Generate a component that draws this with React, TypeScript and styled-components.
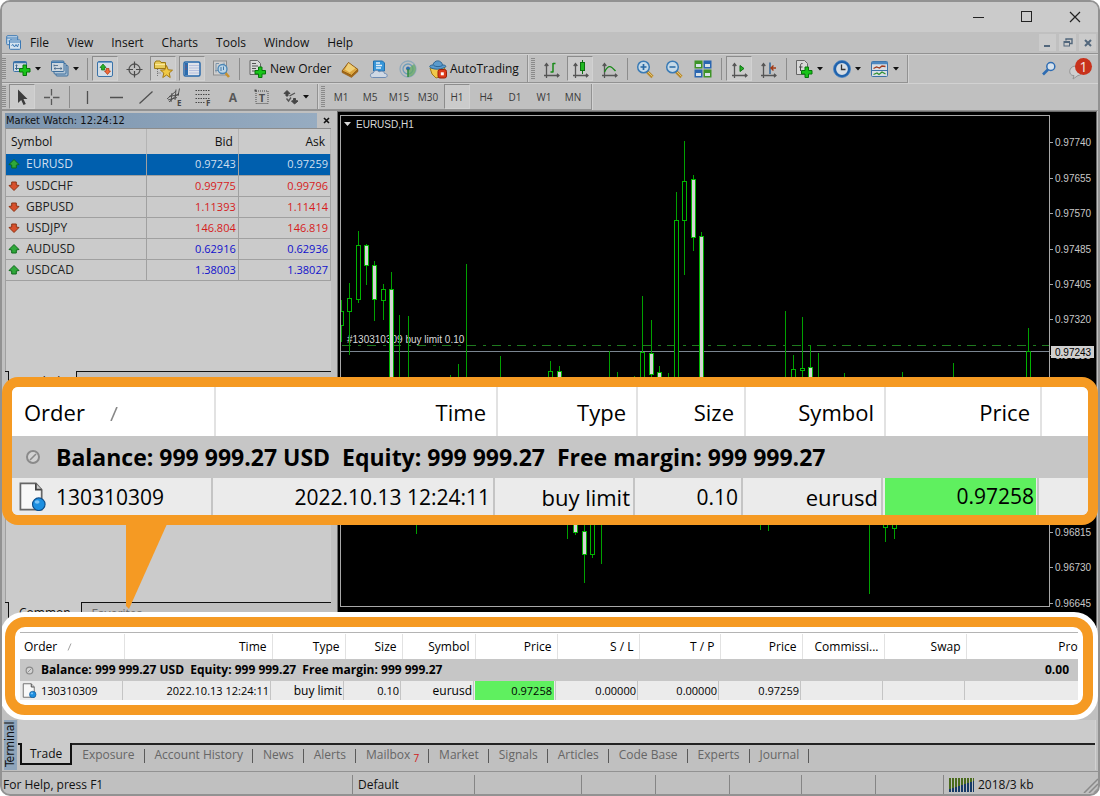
import React from "react";
import styled, { createGlobalStyle, css } from "styled-components";

const ui = `"Open Sans", "Noto Sans", sans-serif`;
const tahoma = `"DejaVu Sans Condensed", "DejaVu Sans", sans-serif`;
const orange = "#f59a23";
const face = "#c0c0c0";
const light = "#cbcbcb";
const edge = "#929292";

const GlobalStyle = createGlobalStyle`
  * { box-sizing: border-box; }
  body { margin: 0; background: #fff; font-family: ${ui}; font-size: 12px; color: #111; }
  button { font: inherit; color: inherit; background: none; border: 0; padding: 0; margin: 0; }
  table { border-collapse: collapse; border-spacing: 0; }
  svg { display: block; }
`;

const Frame = styled.div`
  min-height: 100vh;
  display: flex;
  flex-direction: column;
  background: ${face};
  border: 2px solid ${edge};
  border-radius: 10px;
  overflow: hidden;
`;

/* ---------- title bar and menu ---------- */

const TitleBar = styled.header`
  height: 30px;
  background: ${light};
  display: flex;
  justify-content: flex-end;
  align-items: center;
  padding-right: 15px;
  gap: 32px;
`;

const CaptionButton = styled.button`
  width: 16px;
  height: 16px;
  display: grid;
  place-items: center;
`;

const MenuBar = styled.nav`
  height: 22px;
  display: flex;
  align-items: center;
  padding: 0 2px 0 4px;
  border-bottom: 1px solid ${edge};
`;

const MenuItem = styled.button`
  padding: 0 9px;
  line-height: 16px;
`;

const MdiButtons = styled.div`
  margin-left: auto;
  display: flex;
  gap: 3px;
`;

const MdiButton = styled.button`
  width: 17px;
  height: 17px;
  background: ${light};
  display: grid;
  place-items: center;
`;

/* ---------- toolbars ---------- */

const ToolRow = styled.div`
  display: flex;
  height: 29px;
  align-items: stretch;
  border-top: 1px solid #d2d2d2;
`;

const LowerRow = styled(ToolRow)`
  height: 28px;
  border-bottom: 1px solid ${edge};
`;

const Group = styled.div`
  display: flex;
  align-items: center;
  padding: 0 2px 0 3px;
  border-right: 1px solid ${edge};
  border-bottom: 1px solid ${edge};
  box-shadow: 1px 0 0 #d2d2d2;
  &:first-child { padding-left: 0; }
`;

const Grip = styled.i`
  width: 4px;
  height: 21px;
  margin-right: 3px;
  background: repeating-linear-gradient(#8a8a8a 0 1px, ${face} 1px 2px);
`;

const ToolButton = styled.button<{ $pressed?: boolean }>`
  width: 26px;
  height: 25px;
  margin-right: 3px;
  display: grid;
  place-items: center;
  border: 1px solid transparent;
  ${(p) =>
    p.$pressed &&
    css`
      background: ${light};
      border-color: #8c8c8c #d2d2d2 #d2d2d2 #8c8c8c;
    `}
`;

const FrameButton = styled(ToolButton)`
  font-size: 10px;
  color: #3a3a3a;
`;

const WideButton = styled.button<{ $width: number }>`
  min-width: ${(p) => p.$width}px;
  height: 25px;
  margin-right: 3px;
  padding-left: 4px;
  display: flex;
  align-items: center;
  gap: 2px;
  white-space: nowrap;
`;

const DropButton = styled.button`
  width: 38px;
  height: 25px;
  padding-left: 3px;
  display: flex;
  align-items: center;
  gap: 3px;
`;

const Sep = styled.i`
  width: 1px;
  height: 22px;
  margin: 0 4px 0 2px;
  background: #8c8c8c;
`;

const RightTools = styled.div`
  margin-left: auto;
  display: flex;
  align-items: center;
  gap: 11px;
  padding-right: 4px;
`;

const ToolFlat = styled.button`
  display: block;
`;

/* ---------- workspace ---------- */

const Workspace = styled.main`
  flex: 1;
  min-height: 320px;
  display: flex;
  position: relative;
`;

const Side = styled.aside`
  width: 329px;
  flex: none;
  margin-right: 6px;
  padding: 2px 0 0 3px;
  display: flex;
  flex-direction: column;
`;

const PanelTitle = styled.div`
  display: flex;
  align-items: center;
  height: 15px;
  font-family: ${tahoma};
  font-size: 11px;
  line-height: 15px;
`;

const PanelName = styled.span`
  flex: 1;
  padding-left: 1px;
  background: linear-gradient(90deg, #7b94ae, #97acc1);
`;

const PanelClose = styled.button`
  width: 14px;
  height: 15px;
  padding-left: 4px;
  display: grid;
  place-items: center;
`;

const PanelBody = styled.div<{ $grow?: boolean }>`
  background: ${light};
  border-top: 1px solid #8c8c8c;
  border-left: 1px solid #a0a0a0;
  ${(p) => (p.$grow ? "flex: 1;" : "height: 243px;")}
`;

const Quotes = styled.table`
  width: 100%;
  table-layout: fixed;
  th {
    height: 25px;
    padding: 0 5px;
    font-weight: 400;
    text-align: right;
    border-right: 1px solid #b4b4b4;
  }
  th:first-child { text-align: left; }
`;

const SymbolCol = styled.col`width: 140px;`;
const QuoteCol = styled.col`width: auto;`;

const QuoteRow = styled.tr<{ $tone: string; $selected?: boolean }>`
  background: ${(p) => (p.$selected ? "#005fae" : "transparent")};
  td {
    height: 21px;
    padding: 0 2px;
    border-right: 1px solid #a0a0a0;
    border-bottom: 1px solid #a0a0a0;
    text-align: right;
    font-size: 11px;
    line-height: 18px;
    color: ${(p) => p.$tone};
  }
  td:first-child {
    text-align: left;
    font-size: 12px;
    color: ${(p) => (p.$selected ? "#d0dfee" : "#222")};
  }
`;

const SymbolName = styled.span`
  display: flex;
  align-items: center;
  gap: 6px;
  line-height: 18px;
`;

const SideTabs = styled.div<{ $height: number }>`
  height: ${(p) => p.$height}px;
  display: flex;
  overflow: hidden;
  line-height: 18px;
  &::before { content: ""; width: 3px; border-top: 1px solid #111; border-right: 1px solid #111; }
`;

const SideTab = styled.button<{ $active?: boolean }>`
  padding: 2px 10px 0;
  display: flex;
  ${(p) =>
    p.$active
      ? css`background: ${light}; border-right: 1px solid #111;`
      : css`color: #6a6a6a; border-top: 1px solid #111;`}
`;

const TabRest = styled.div`
  flex: 1;
  border-top: 1px solid #111;
`;

const ChartPane = styled.section`
  flex: 1;
  min-width: 0;
  display: flex;
  background: #000;
  border: 1px solid #6a6a6a;
  border-bottom: 0;
  margin-right: 1px;
`;

const Plot = styled.div`
  flex: 1;
  min-width: 0;
  margin: 3px 0 21px 2px;
  border: 1px solid #a8a8a8;
  position: relative;
  overflow: hidden;
`;

const PlotArt = styled.svg`
  position: absolute;
  left: 0;
  top: 0;
  width: 100%;
  height: 100%;
  font: 10px "Liberation Sans", Arial, sans-serif;
  fill: #d8d8d8;
`;

const Axis = styled.svg`
  flex: none;
  width: 46px;
  height: 100%;
  font: 10px "Liberation Sans", Arial, sans-serif;
  fill: #c8c8c8;
`;

/* ---------- magnified callout ---------- */

const Callout = styled.section`
  position: absolute;
  left: 0;
  right: 0;
  top: 266px;
  height: 148px;
  border: 10px solid ${orange};
  border-radius: 16px;
  background: #ebebeb;
`;

const CalloutClip = styled.div`
  height: 100%;
  overflow: hidden;
  border-radius: 6px;
`;

const Pointer = styled.svg`
  position: absolute;
  left: 124px;
  top: 413px;
  z-index: 1;
`;

/* ---------- orders tables ---------- */

const Orders = styled.table<{ $big?: boolean }>`
  table-layout: fixed;
  width: ${(p) => (p.$big ? "100%" : "calc(100% + 16px)")};
  font-size: ${(p) => (p.$big ? 22 : 12)}px;
  line-height: ${(p) => (p.$big ? 28 : 16)}px;
  white-space: nowrap;
  color: #000;
  th, td { padding: 0; text-align: right; overflow: hidden; }
  th {
    height: ${(p) => (p.$big ? 49 : 25)}px;
    background: #fff;
    font-weight: 400;
    padding-right: ${(p) => (p.$big ? 10 : 5)}px;
    border-right: ${(p) => (p.$big ? 2 : 1)}px solid #e2e2e2;
  }
  th:first-child {
    text-align: left;
    padding-left: ${(p) => (p.$big ? 12 : 4)}px;
  }
  th:last-child { border-right: 0; }
`;

const Width = styled.col<{ $w?: number }>`
  width: ${(p) => (p.$w ? `${p.$w}px` : "auto")};
`;

const BalanceRow = styled.tr<{ $big?: boolean }>`
  background: #c6c6c6;
  td {
    height: ${(p) => (p.$big ? 42 : 22)}px;
    font-weight: 700;
    font-size: ${(p) => (p.$big ? 23 : 12)}px;
    white-space: pre;
  }
  td:last-child { padding-right: ${(p) => (p.$big ? 0 : 25)}px; }
`;

const OrderRow = styled.tr<{ $big?: boolean }>`
  background: #ebebeb;
  td {
    height: ${(p) => (p.$big ? 37 : 19)}px;
    font-size: ${(p) => (p.$big ? 21 : 11)}px;
    padding-right: ${(p) => (p.$big ? 7 : 3)}px;
    background: linear-gradient(#c4c4c4, #c4c4c4) right ${(p) => (p.$big ? 2 : 1)}px top /
      ${(p) => (p.$big ? 2 : 1)}px 100% no-repeat;
  }
  td:nth-child(3), td:nth-child(5) {
    font-size: ${(p) => (p.$big ? 22 : 12)}px;
  }
  td:last-child { background: none; }
`;

const PriceHit = styled.span<{ $big?: boolean }>`
  display: block;
  background: #5ff05f;
  height: ${(p) => (p.$big ? 37 : 19)}px;
  line-height: ${(p) => (p.$big ? 36 : 19)}px;
  margin-right: ${(p) => (p.$big ? -2 : 0)}px;
  padding-right: 2px;
`;

const WithIcon = styled.span<{ $big?: boolean }>`
  display: flex;
  align-items: center;
  gap: ${(p) => (p.$big ? 9 : 4)}px;
  padding-left: ${(p) => (p.$big ? 6 : 1)}px;
`;

const PadIcon = styled.span<{ $big?: boolean }>`
  width: ${(p) => (p.$big ? 29 : 16)}px;
  display: grid;
  place-items: center;
`;

const SortMark = styled.span<{ $big?: boolean }>`
  display: inline-block;
  margin-left: ${(p) => (p.$big ? 24 : 10)}px;
  svg { display: inline-block; vertical-align: baseline; }
`;

/* ---------- terminal ---------- */

const Terminal = styled.section`
  display: flex;
  flex-direction: column;
  position: relative;
`;

const Highlight = styled.div`
  margin: -16px 0 0 -2px;
  position: relative;
  background: #fff;
  border-radius: 24px;
  padding: 5px;
`;

const HighlightRing = styled.div`
  border: 10px solid ${orange};
  border-radius: 20px;
  padding: 5px;
`;

const HighlightClip = styled.div`
  overflow: hidden;
  border-top: 1px solid #b4b4b4;
  padding-top: 1px;
`;

const TerminalFoot = styled.div`
  display: flex;
  height: 50px;
  margin-bottom: 1px;
  padding-left: 2px;
`;

const TerminalName = styled.div`
  width: 13px;
  background: #8fa5bb;
  writing-mode: vertical-rl;
  transform: rotate(180deg);
  font-family: ${tahoma};
  font-size: 12px;
  line-height: 13px;
  padding-top: 3px;
  white-space: nowrap;
`;

const TabArea = styled.div`
  flex: 1;
  min-width: 0;
  display: flex;
  flex-direction: column;
  margin: 0 2px 0 1px;
  border-right: 1px solid #d2d2d2;
  &::before { content: ""; height: 23px; background: ${light}; flex: none; }
`;

const Tabs = styled.div`
  display: flex;
  align-items: flex-start;
  &::before { content: ""; width: 2px; height: 2px; background: #111; }
`;

const Tab = styled.button<{ $active?: boolean }>`
  height: 22px;
  padding: 0 10px;
  line-height: 18px;
  white-space: nowrap;
  color: #666;
  border-top: 2px solid #222;
  ${(p) =>
    p.$active
      ? css`
          color: #111;
          background: ${light};
          border: 2px solid #111;
          border-top: 0;
          padding: 0 8px;
          line-height: 22px;
        `
      : css`
          background: linear-gradient(#5a5a5a, #5a5a5a) right 4px / 1px 14px no-repeat;
        `}
`;

const TabLine = styled.div`
  flex: 1;
  height: 2px;
  background: #222;
`;

const MailCount = styled.sub`
  color: #d01818;
  font-size: 10px;
  line-height: 0;
  margin-left: 3px;
`;

const StatusBar = styled.footer`
  height: 23px;
  display: flex;
  align-items: center;
  border-top: 1px solid ${edge};
  padding-top: 3px;
  line-height: 16px;
  overflow: hidden;
`;

const StatusCell = styled.div<{ $w?: number }>`
  ${(p) => (p.$w ? `width: ${p.$w}px;` : "flex: 1;")}
  flex-shrink: 0;
  height: 19px;
  display: flex;
  align-items: center;
  gap: 4px;
  padding-left: 5px;
  border-left: 1px solid #858585;
  &:first-child { border-left: 0; padding-left: 1px; }
`;

const ResizeGrip = styled.span`
  margin-left: auto;
`;

/* ---------- icons ---------- */

const Icon = ({ children, size = 20 }: { children: React.ReactNode; size?: number }) => (
  <svg width={size} height={size} viewBox="0 0 20 20" fill="none" aria-hidden="true">
    {children}
  </svg>
);

const Caret = () => (
  <svg width="6" height="4" viewBox="0 0 6 4" aria-hidden="true">
    <path d="M0 0H6L3 3.5Z" fill="#111" />
  </svg>
);

const Plus = ({ x, y }: { x: number; y: number }) => (
  <path
    transform={`translate(${x} ${y})`}
    d="M4 0.5H7.5V4H11V7.5H7.5V11H4V7.5H0.5V4H4Z"
    fill="#19c419"
    stroke="#07760a"
  />
);

const AxisBase = () => (
  <path d="M5.5 5V19M3 16.5H18M3.700 7L5.500 4.500L7.300 7M16 14.700L18 16.500L16 18.300" stroke="#555" strokeWidth="1.300" />
);

const AppIcon = () => (
  <svg width="15" height="15" viewBox="0 0 15 15" fill="none" aria-hidden="true">
    <rect x=".7" y=".7" width="11" height="9" rx="1" fill="#c9dcec" stroke="#3a78b4" />
    <path d="M1 3H11.500M2.500 6H4L5 4.500L6 6" stroke="#3a78b4" />
    <rect x="3.500" y="5" width="11" height="9.300" rx="1" fill="#d5e4f0" stroke="#3a78b4" />
    <path d="M4 7H14M5.500 10.500L7 9.500L8.500 12L10 9.500L11.500 12L12.500 9" stroke="#3a78b4" />
  </svg>
);

const NewChart = () => (
  <Icon>
    <rect x="1.500" y="2.500" width="13" height="10" rx="1" fill="#d0dae2" stroke="#3a72a8" />
    <path d="M1.500 3.500H14.500" stroke="#3a72a8" strokeWidth="1.500" />
    <path d="M4.500 5.500V11M3 9.500H7.500M3.500 7L4.500 6L5.500 7" stroke="#40698e" />
    <Plus x={7} y={5.500} />
  </Icon>
);

const Profiles = () => (
  <Icon>
    <rect x="6" y="6.500" width="12" height="10.500" rx="1" fill="#a4bdd2" stroke="#3f6f9c" />
    <rect x="4" y="4.500" width="12" height="10.500" rx="1" fill="#b3c7d8" stroke="#3f6f9c" />
    <rect x="1.500" y="2" width="12.500" height="10.500" rx="1" fill="#ccd6de" stroke="#3f6f9c" />
    <path d="M1.500 3.200H14" stroke="#3f78ae" strokeWidth="1.500" />
    <path d="M4 5.500V7.500M4 6.500H8M4 9.500H12M5.500 8.500L4 9.500L5.500 10.500M10.500 8.500L12 9.500L10.500 10.500" stroke="#3f6184" strokeWidth=".8" />
  </Icon>
);

const MarketWatchIcon = () => (
  <Icon>
    <rect x="2.500" y="2.500" width="15" height="15" rx="1.500" fill="#d3dde6" stroke="#3a72a8" />
    <path d="M3 3.500H17" stroke="#6fa0cc" />
    <path d="M8 5L11 8.500H9.500V11H6.500V8.500H5Z" fill="#28b428" stroke="#0c7010" strokeWidth=".7" />
    <path d="M12.500 15.500L9.500 12H11V9.500H14V12H15.500Z" fill="#f06a3a" stroke="#a83410" strokeWidth=".7" />
  </Icon>
);

const CrosshairIcon = () => (
  <Icon>
    <circle cx="10.500" cy="10.500" r="5.500" stroke="#565656" strokeWidth="1.300" />
    <path d="M10.500 2.500V9M10.500 12V18.500M2.500 10.500H9M12 10.500H18.500" stroke="#4a4a4a" strokeWidth="1.200" />
  </Icon>
);

const NavigatorIcon = () => (
  <Icon>
    <path d="M1.500 4L3 2H7L8 3.500H12.500V9.500H1.500Z" fill="#e8cc5c" stroke="#9c7a16" />
    <path d="M2 5.500H12" stroke="#fbe99a" />
    <path d="M4.500 10V18M4.500 14H8" stroke="#777" strokeDasharray="1 1" />
    <path d="M13.500 6.500L15.200 10.800L19.500 11.200L16.200 14L17.200 18.500L13.500 16L9.800 18.500L10.800 14L7.500 11.200L11.800 10.800Z" fill="#f0c844" stroke="#a67a10" />
  </Icon>
);

const TerminalIcon = () => (
  <Icon>
    <rect x="2" y="3" width="16" height="14" rx="1.500" fill="#dfe3ea" stroke="#2869aa" strokeWidth="1.500" />
    <rect x="3" y="4" width="3" height="12" fill="#2a6cae" />
    <path d="M7.500 6.500H17M7.500 9H17M7.500 11.500H17M7.500 14H17" stroke="#8b9bd0" strokeDasharray="1 1" />
    <path d="M3.500 7H4.500M3.500 10H4.500" stroke="#d33" />
  </Icon>
);

const TesterIcon = () => (
  <Icon>
    <rect x="2.500" y="2" width="13" height="14" fill="#cfcfcf" stroke="#8d8d8d" />
    <path d="M5 4.500V13.500M5 4.500H8M13 3.500V6M4 11.500H7" stroke="#7b93a8" />
    <path d="M14.500 14L18 18" stroke="#c8912c" strokeWidth="2.600" />
    <circle cx="11.500" cy="10" r="4.500" fill="#b9d6ea" fillOpacity=".85" stroke="#4a86b6" strokeWidth="1.300" />
    <path d="M10 8V12M12.500 7.500V11" stroke="#4077a8" />
  </Icon>
);

const NewOrderIcon = () => (
  <Icon>
    <path d="M2 1.500H9.500L12.500 4.500V15.500H2Z" fill="#d8d8d8" stroke="#666" />
    <path d="M4 4.500H8M4 7H10M4 9.500H8M4 12H7" stroke="#555" />
    <Plus x={6.500} y={7.500} />
  </Icon>
);

const EditorIcon = () => (
  <Icon>
    <path d="M8.500 3.500L18 10.500L11.500 16.500L2 12Z" fill="#dca640" stroke="#8d5a12" />
    <path d="M8.500 4L15.500 9.200L9.500 13.500L5 10.500Z" fill="#efcf78" />
    <path d="M2 12V13.500L11.500 18.500L18 12.500V10.500L11.500 16.500Z" fill="#a86a18" stroke="#8d5a12" strokeWidth=".5" />
  </Icon>
);

const CloudIcon = () => (
  <Icon>
    <path d="M4.500 2H13.500L15.500 4V12H4.500Z" fill="#3796d8" stroke="#2070b0" />
    <path d="M7 4H11M7 6.500H13M7 9H12" stroke="#e2f0fa" strokeWidth="1.300" />
    <path d="M3.500 18.500C.5 18.500 .8 13.800 4.200 14C5 10.800 9 10.800 10 13C12.500 11.300 15.500 12.500 15.500 14.500C19 14.300 19 18.500 16 18.500Z" fill="#cfd8e4" stroke="#6f8cb4" />
  </Icon>
);

const SignalIcon = () => (
  <Icon>
    <circle cx="10" cy="10" r="8" stroke="#8fa9bb" strokeWidth="1.300" />
    <circle cx="10" cy="10" r="5" stroke="#6c9dbb" strokeWidth="1.300" />
    <path d="M10 18A8 8 0 0 0 16 5L10 10Z" fill="#5fa860" fillOpacity=".7" />
    <circle cx="10" cy="9.500" r="2" fill="#2f6fae" />
    <path d="M10 10V18" stroke="#2f8a40" strokeWidth="1.500" />
  </Icon>
);

const AutoIcon = () => (
  <Icon>
    <path d="M2 9L17 8L14.500 17L8 19L4 15Z" fill="#f0c84a" stroke="#a07a18" />
    <path d="M5 6C6 .5 13.500 .5 14.500 6C18 6 19 7.500 16 8.800C12 10.800 6.500 10.500 3 9C.5 7.500 2 6 5 6Z" fill="#5b9bcd" stroke="#2d6594" />
    <path d="M5.500 6.500C8 8 12 8 14.500 6.500" stroke="#2d6594" />
    <rect x="10" y="10.500" width="8.500" height="8.500" rx="2" fill="#dd3a1a" stroke="#9a2008" />
    <rect x="12.800" y="13.300" width="3" height="3" fill="#fff" />
  </Icon>
);

const BarsIcon = () => (
  <Icon>
    <AxisBase />
    <path d="M12 4V13.500M12 4.500H14.500M9.500 13H12" stroke="#188a18" strokeWidth="1.500" />
  </Icon>
);

const CandleIcon = () => (
  <Icon>
    <AxisBase />
    <path d="M12.500 1V15" stroke="#0c7010" />
    <rect x="10.500" y="3.500" width="4" height="8" fill="#20b820" stroke="#0c7010" />
  </Icon>
);

const LineIcon = () => (
  <Icon>
    <AxisBase />
    <path d="M5.500 13C9.500 5 12 7 16.500 12" stroke="#188a18" strokeWidth="1.400" />
  </Icon>
);

const ZoomIcon = ({ plus }: { plus?: boolean }) => (
  <Icon>
    <path d="M12 12.500L17.500 18" stroke="#b88a30" strokeWidth="3.200" />
    <path d="M12.500 12.500L17.500 17.500" stroke="#e2c878" />
    <circle cx="8.500" cy="8" r="5.800" fill="#c6dae8" stroke="#3b7bb5" strokeWidth="1.500" />
    <path d={plus ? "M5.500 8H11.500M8.500 5V11" : "M5.500 8H11.500"} stroke="#2768a4" strokeWidth="1.700" />
  </Icon>
);

const TileIcon = () => (
  <Icon>
    <rect x="1.500" y="1.500" width="8" height="8" fill="#3e9428" />
    <rect x="10.500" y="1.500" width="8" height="8" fill="#2a66b0" />
    <rect x="1.500" y="10.500" width="8" height="8" fill="#2a66b0" />
    <rect x="10.500" y="10.500" width="8" height="8" fill="#3e9428" />
    <path d="M3 6.500H8M12 6.500H17M3 15.500H8M12 15.500H17" stroke="#d8e2e8" strokeWidth="3" />
  </Icon>
);

const ScrollIcon = () => (
  <Icon>
    <AxisBase />
    <path d="M11 6.500L15 9.500L11 12.500Z" fill="#28b428" stroke="#0c7010" />
  </Icon>
);

const ShiftIcon = () => (
  <Icon>
    <AxisBase />
    <path d="M12 3.500V15" stroke="#285f94" strokeWidth="1.400" />
    <path d="M13 9H18M15.500 6.500L13 9L15.500 11.500" stroke="#a33a14" strokeWidth="1.400" />
  </Icon>
);

const IndicatorIcon = () => (
  <Icon>
    <path d="M2.500 1.500H10.500L13.500 4.500V15.500H2.500Z" fill="#d8d8d8" stroke="#666" />
    <path d="M8.500 4.500C6.500 4 6.500 6 6.500 7.500V12M5 8H8.500" stroke="#444" />
    <Plus x={7} y={7.500} />
  </Icon>
);

const ClockIcon = () => (
  <Icon>
    <circle cx="10" cy="10" r="7.200" fill="#d6dde4" stroke="#1f62ac" strokeWidth="2.600" />
    <path d="M9.500 5.500V10.500H13.500" stroke="#333" strokeWidth="1.300" />
    <circle cx="10" cy="10" r="8.500" stroke="#3f7fc4" strokeWidth=".7" />
  </Icon>
);

const TemplateIcon = () => (
  <Icon>
    <rect x="1.500" y="2.500" width="16" height="15" rx="1" fill="#d8dee4" stroke="#3a72a8" />
    <path d="M2 4H17.500" stroke="#4d88c0" strokeWidth="2.500" />
    <path d="M2 11.500H17" stroke="#3a72a8" />
    <path d="M3.500 9.500L6.500 8L9.500 9L12 7L15.500 7.500" stroke="#a03a1c" strokeWidth="1.300" />
    <path d="M3.500 15.500L7 14L9 15.500L12 13L15.500 15" stroke="#2f9030" strokeWidth="1.300" />
  </Icon>
);

const FindIcon = () => (
  <svg width="16" height="16" viewBox="0 0 16 16" fill="none" aria-hidden="true">
    <circle cx="9.800" cy="5.500" r="4" fill="#d7e2ec" stroke="#2e6cb2" strokeWidth="1.500" />
    <path d="M7 8.500L2 13.500" stroke="#2e6cb2" strokeWidth="2.600" />
  </svg>
);

const ChatIcon = () => (
  <svg width="26" height="24" viewBox="0 0 26 24" aria-hidden="true">
    <path d="M8 9C0 9 0 19 6 18.500L5 22L10 18.500C16 18 16 9 8 9Z" fill="#cfcfcf" stroke="#949494" />
    <circle cx="15.500" cy="9.500" r="8.500" fill="#c8321c" />
    <text x="15.500" y="14.500" textAnchor="middle" fontSize="14" fontFamily="Open Sans, sans-serif" fill="#f4e6e2">1</text>
  </svg>
);

const ArrowIcon = () => (
  <Icon>
    <path d="M6 2.500V16L9.200 13L11.500 18L13.800 17L11.500 12H15.500Z" fill="#3d3d3d" />
  </Icon>
);

const CrossIcon = () => (
  <Icon>
    <path d="M10.500 2V8.500M10.500 12V18M3 10.500H9M12 10.500H18.500" stroke="#5a5a5a" strokeWidth="1.300" />
  </Icon>
);

const StrokeIcon = ({ d }: { d: string }) => (
  <Icon>
    <path d={d} stroke="#505050" strokeWidth="1.300" />
  </Icon>
);

const ChannelIcon = () => (
  <Icon>
    <path d="M3 12L12 4M5 15L15 6M5 9.500L15 7.500M4 13L13 10.500M8 6L7 15M12 2.500L11 13M15.500 1.500L14 9" stroke="#484848" strokeWidth=".9" />
    <text x="13" y="19" fontSize="8" fontWeight="700" fontFamily="Open Sans, sans-serif" fill="#484848">E</text>
  </Icon>
);

const FiboIcon = () => (
  <Icon>
    <path d="M2.500 3.500H17.500M2.500 7.500H17.500M2.500 11.500H17.500M2.500 15.500H11.500" stroke="#484848" strokeDasharray="1.500 1" />
    <text x="13" y="19" fontSize="8" fontWeight="700" fontFamily="Open Sans, sans-serif" fill="#484848">F</text>
  </Icon>
);

const LetterIcon = () => (
  <Icon>
    <text x="11" y="15" textAnchor="middle" fontSize="12" fontWeight="700" fontFamily="Open Sans, sans-serif" fill="#585858">A</text>
  </Icon>
);

const LabelIcon = () => (
  <Icon>
    <rect x="5" y="4" width="12" height="12.500" stroke="#484848" strokeDasharray="1 1" />
    <rect x="3.500" y="2.500" width="2" height="2" fill="#484848" />
    <text x="11" y="15" textAnchor="middle" fontSize="11" fontWeight="700" fontFamily="Open Sans, sans-serif" fill="#505050">T</text>
  </Icon>
);

const ShapesIcon = () => (
  <Icon>
    <path d="M7 3.500L10 6.500L8 6.800V9H6V6.800L4 6.500Z M14.500 17L11.500 14L13.500 13.500V11.500H15.500V13.500L18 14Z" fill="#444" stroke="#444" />
    <path d="M9.500 9L15 6M6.500 11.500L8.500 14L11 10.500" stroke="#555" strokeWidth="1.400" />
  </Icon>
);

const QuoteArrow = ({ up }: { up?: boolean }) => (
  <svg width="12" height="12" viewBox="0 0 12 12" aria-hidden="true">
    {up ? (
      <path d="M6 1.500L11 6.500L8.300 7V10H3.700V7L1 6.500Z" fill="#2fa83a" stroke="#0f6a1c" />
    ) : (
      <path d="M6 10.500L11 5.500L8.300 5V2H3.700V5L1 5.500Z" fill="#d8502c" stroke="#8c3414" />
    )}
  </svg>
);

const NullIcon = ({ size }: { size: number }) => (
  <svg width={size} height={size} viewBox="0 0 16 16" fill="none" aria-hidden="true">
    <circle cx="8" cy="8" r="6" fill="#d2d2d2" stroke="#8a8a8a" strokeWidth="2" />
    <path d="M5 11L11 5" stroke="#8a8a8a" strokeWidth="1.600" />
  </svg>
);

const PageIcon = ({ size }: { size: number }) => (
  <svg width={size} height={size} viewBox="0 0 28 30" fill="none" aria-hidden="true">
    <path d="M1.500 1.500H17.500L23.500 8V28.500H1.500Z" fill="#f8f8f8" stroke="#666" strokeWidth="1.800" />
    <path d="M17.500 1.500V8H23.500" fill="#ccc" stroke="#444" strokeWidth="1.800" />
    <circle cx="20.500" cy="23" r="6.500" fill="#1d8fe0" stroke="#0d4f8c" strokeWidth="1.200" />
    <ellipse cx="18.800" cy="20.800" rx="2.500" ry="1.800" fill="#7cc4f6" />
  </svg>
);

/* ---------- data ---------- */

const quotes = [
  { name: "EURUSD", bid: "0.97243", ask: "0.97259", up: true, tone: "#d0dfee", selected: true },
  { name: "USDCHF", bid: "0.99775", ask: "0.99796", up: false, tone: "#d61c1c" },
  { name: "GBPUSD", bid: "1.11393", ask: "1.11414", up: false, tone: "#d61c1c" },
  { name: "USDJPY", bid: "146.804", ask: "146.819", up: false, tone: "#d61c1c" },
  { name: "AUDUSD", bid: "0.62916", ask: "0.62936", up: true, tone: "#1010cc" },
  { name: "USDCAD", bid: "1.38003", ask: "1.38027", up: true, tone: "#1010cc" },
];

type Candle = [x: number, high: number, low: number, open?: number, close?: number, bear?: boolean];

const candles: Candle[] = [
  [0, 184, 226, 195, 209],
  [8, 167, 239, 182, 195],
  [17, 115, 187, 129, 183],
  [25, 128, 169, 129, 149, true],
  [33, 145, 205, 149, 183, true],
  [42, 168, 204, 173, 184],
  [50, 156, 276, 173, 276, true],
  [58, 199, 276],
  [67, 200, 276],
  [75, 400, 418],
  [109, 259, 276],
  [117, 248, 276],
  [125, 148, 276],
  [159, 240, 276],
  [209, 245, 276, 255, 276],
  [218, 250, 276, 255, 276, true],
  [226, 400, 423],
  [234, 400, 419, 400, 416, true],
  [243, 400, 467, 415, 438, true],
  [251, 400, 442, 400, 438],
  [260, 400, 448],
  [268, 235, 276],
  [276, 256, 276],
  [285, 261, 276],
  [293, 260, 276],
  [301, 180, 276, 236, 276],
  [310, 204, 276, 237, 258, true],
  [318, 250, 276, 256, 276, true],
  [327, 257, 276],
  [335, 76, 276, 104, 276],
  [343, 25, 159, 65, 104],
  [352, 59, 135, 63, 121, true],
  [360, 116, 276, 120, 276, true],
  [419, 400, 414],
  [427, 400, 415],
  [444, 195, 276],
  [452, 239, 276, 253, 276],
  [461, 201, 276, 252, 254],
  [469, 229, 276, 251, 276, true],
  [477, 237, 276],
  [503, 257, 276],
  [528, 400, 478],
  [544, 400, 426, 400, 411],
  [553, 400, 423, 400, 412],
  [561, 256, 276],
  [612, 247, 276],
  [687, 212, 276, 235, 276],
];

const prices: [number, string][] = [
  [30, "0.97740"], [66, "0.97655"], [101, "0.97570"], [137, "0.97485"], [172, "0.97405"], [207, "0.97320"],
  [243, "0.97235"], [420, "0.96815"], [455, "0.96730"], [491, "0.96645"],
];

const columns = ["Order", "Time", "Type", "Size", "Symbol", "Price", "S / L", "T / P", "Price", "Commissi...", "Swap", "Profit"];
const smallWidths = [104, 148, 73, 57, 73, 82, 82, 81, 82, 82, 82];
const bigWidths = [203, 282, 140, 108, 140, 156];
const cells = ["2022.10.13 12:24:11", "buy limit", "0.10", "eurusd"];
const balance = "Balance: 999 999.27 USD  Equity: 999 999.27  Free margin: 999 999.27";
const tabs = ["Trade", "Exposure", "Account History", "News", "Alerts", "Mailbox", "Market", "Signals", "Articles", "Code Base", "Experts", "Journal"];
const statusWidths = [122, 107, 74, 74, 72, 74, 68];

/* ---------- parts ---------- */

const OrdersTable = ({ big }: { big?: boolean }) => {
  const heads = big ? columns.slice(0, 6) : columns;
  const widths = big ? bigWidths : smallWidths;
  return (
    <Orders $big={big}>
      <colgroup>
        {widths.map((w, i) => <Width key={i} $w={w} />)}
        <Width />
      </colgroup>
      <thead>
        <tr>
          {heads.map((h, i) => (
            <th key={i} scope="col">
              {h}
              {i === 0 && (
                <SortMark $big={big}>
                  <svg width={big ? 10 : 5} height={big ? 14 : 8} viewBox="0 0 10 14" aria-hidden="true">
                    <path d="M2 14L8 0" stroke="#888" strokeWidth="1.600" />
                  </svg>
                </SortMark>
              )}
            </th>
          ))}
          {big && <th />}
        </tr>
      </thead>
      <tbody>
        <BalanceRow $big={big}>
          <td colSpan={big ? 7 : 11}>
            <WithIcon $big={big}>
              <PadIcon $big={big}><NullIcon size={big ? 16 : 9} /></PadIcon>
              {balance}
            </WithIcon>
          </td>
          {!big && <td>0.00</td>}
        </BalanceRow>
        <OrderRow $big={big}>
          <td>
            <WithIcon $big={big}>
              <PadIcon $big={big}><PageIcon size={big ? 29 : 15} /></PadIcon>
              130310309
            </WithIcon>
          </td>
          {cells.map((c) => <td key={c}>{c}</td>)}
          <td><PriceHit $big={big}>0.97258</PriceHit></td>
          {!big && (
            <>
              <td>0.00000</td>
              <td>0.00000</td>
              <td>0.97259</td>
              <td />
              <td />
            </>
          )}
          <td />
        </OrderRow>
      </tbody>
    </Orders>
  );
};

const Chart = () => (
  <ChartPane aria-label="EURUSD chart">
    <Plot>
      <PlotArt>
        <path d="M3 6H10L6.500 10Z" />
        <text x="15" y="12">EURUSD,H1</text>
        <text x="6" y="227">#130310309 buy limit 0.10</text>
        <line x1="1" x2="100%" y1="229.500" y2="229.500" stroke="#1f7a1f" strokeDasharray="9 7 3 6" />
        <line x1="0" x2="100%" y1="235.500" y2="235.500" stroke="#7a8590" />
        {candles.map(([x, high, low, open, close, bear]) => (
          <g key={x} shapeRendering="crispEdges">
            <line x1={x + 0.5} x2={x + 0.5} y1={high} y2={low} stroke="#00a000" />
            {open !== undefined && close !== undefined && (
              <rect
                x={x - 1.5}
                y={open + 0.5}
                width="4"
                height={close - open}
                fill={bear ? "#d4d4d4" : "#000"}
                stroke="#00b400"
              />
            )}
          </g>
        ))}
      </PlotArt>
    </Plot>
    <Axis>
      {prices.map(([y, label]) => (
        <g key={label}>
          <line x1="0" x2="3" y1={y + 0.5} y2={y + 0.5} stroke="#a8a8a8" />
          <text x="5" y={y + 4}>{label}</text>
        </g>
      ))}
      <rect x="1" y="234" width="43" height="12" fill="#cfcfcf" />
      <text x="5" y="244" fill="#000">0.97243</text>
    </Axis>
  </ChartPane>
);

export default function App() {
  return (
    <>
      <GlobalStyle />
      <Frame>
        <TitleBar>
          <CaptionButton aria-label="Minimize">
            <svg width="12" height="12"><path d="M0 6.500H11" stroke="#222" /></svg>
          </CaptionButton>
          <CaptionButton aria-label="Maximize">
            <svg width="12" height="12"><rect x=".5" y=".5" width="10" height="10" fill="none" stroke="#222" /></svg>
          </CaptionButton>
          <CaptionButton aria-label="Close">
            <svg width="12" height="12"><path d="M1 1L11 11M11 1L1 11" stroke="#222" strokeWidth="1.200" /></svg>
          </CaptionButton>
        </TitleBar>
        <MenuBar>
          <AppIcon />
          {["File", "View", "Insert", "Charts", "Tools", "Window", "Help"].map((m) => (
            <MenuItem key={m}>{m}</MenuItem>
          ))}
          <MdiButtons>
            <MdiButton aria-label="Minimize chart">
              <svg width="9" height="9"><path d="M1 8H7" stroke="#52677c" strokeWidth="2" /></svg>
            </MdiButton>
            <MdiButton aria-label="Restore chart">
              <svg width="10" height="9" fill="none" stroke="#52677c"><path d="M3 2.500V1H9V5.500H7" strokeWidth="1.400" /><rect x="1" y="3.500" width="5.500" height="4.500" /><path d="M1 4H6.500" strokeWidth="2" /></svg>
            </MdiButton>
            <MdiButton aria-label="Close chart">
              <svg width="8" height="8"><path d="M1 1L7 7M7 1L1 7" stroke="#52677c" strokeWidth="2" /></svg>
            </MdiButton>
          </MdiButtons>
        </MenuBar>

        <ToolRow role="toolbar">
          <Group>
            <Grip />
            <DropButton aria-label="New chart"><NewChart /><Caret /></DropButton>
            <DropButton aria-label="Profiles"><Profiles /><Caret /></DropButton>
            <Sep />
            <ToolButton $pressed aria-label="Market Watch"><MarketWatchIcon /></ToolButton>
            <ToolButton aria-label="Data Window"><CrosshairIcon /></ToolButton>
            <ToolButton $pressed aria-label="Navigator"><NavigatorIcon /></ToolButton>
            <ToolButton $pressed aria-label="Terminal"><TerminalIcon /></ToolButton>
            <ToolButton aria-label="Strategy Tester"><TesterIcon /></ToolButton>
            <Sep />
            <WideButton $width={90}><NewOrderIcon />New Order</WideButton>
            <ToolButton aria-label="MetaEditor"><EditorIcon /></ToolButton>
            <ToolButton aria-label="Cloud"><CloudIcon /></ToolButton>
            <ToolButton aria-label="Signals"><SignalIcon /></ToolButton>
            <WideButton $width={98}><AutoIcon />AutoTrading</WideButton>
          </Group>
          <Group>
            <Grip />
            <ToolButton aria-label="Bar chart"><BarsIcon /></ToolButton>
            <ToolButton $pressed aria-label="Candlesticks"><CandleIcon /></ToolButton>
            <ToolButton aria-label="Line chart"><LineIcon /></ToolButton>
            <Sep />
            <ToolButton aria-label="Zoom in"><ZoomIcon plus /></ToolButton>
            <ToolButton aria-label="Zoom out"><ZoomIcon /></ToolButton>
            <ToolButton aria-label="Tile windows"><TileIcon /></ToolButton>
            <Sep />
            <ToolButton $pressed aria-label="Auto scroll"><ScrollIcon /></ToolButton>
            <ToolButton aria-label="Chart shift"><ShiftIcon /></ToolButton>
            <Sep />
            <DropButton aria-label="Indicators"><IndicatorIcon /><Caret /></DropButton>
            <DropButton aria-label="Periods"><ClockIcon /><Caret /></DropButton>
            <DropButton aria-label="Templates"><TemplateIcon /><Caret /></DropButton>
          </Group>
          <RightTools>
            <ToolFlat aria-label="Search"><FindIcon /></ToolFlat>
            <ToolFlat aria-label="Messages"><ChatIcon /></ToolFlat>
          </RightTools>
        </ToolRow>

        <LowerRow role="toolbar">
          <Group>
            <Grip />
            <ToolButton $pressed aria-label="Cursor"><ArrowIcon /></ToolButton>
            <ToolButton aria-label="Crosshair"><CrossIcon /></ToolButton>
            <Sep />
            <ToolButton aria-label="Vertical line"><StrokeIcon d="M10.500 4V17" /></ToolButton>
            <ToolButton aria-label="Horizontal line"><StrokeIcon d="M4 10.500H17" /></ToolButton>
            <ToolButton aria-label="Trendline"><StrokeIcon d="M4.500 16.500L17.500 4.500" /></ToolButton>
            <ToolButton aria-label="Channel"><ChannelIcon /></ToolButton>
            <ToolButton aria-label="Fibonacci"><FiboIcon /></ToolButton>
            <ToolButton aria-label="Text"><LetterIcon /></ToolButton>
            <ToolButton aria-label="Text label"><LabelIcon /></ToolButton>
            <DropButton aria-label="Arrows"><ShapesIcon /><Caret /></DropButton>
          </Group>
          <Group>
            <Grip />
            {["M1", "M5", "M15", "M30", "H1", "H4", "D1", "W1", "MN"].map((t) => (
              <FrameButton key={t} $pressed={t === "H1"}>{t}</FrameButton>
            ))}
          </Group>
        </LowerRow>

        <Workspace>
          <Side>
            <PanelTitle>
              <PanelName>Market Watch: 12:24:12</PanelName>
              <PanelClose aria-label="Close Market Watch">
                <svg width="7" height="7"><path d="M1 1L6 6M6 1L1 6" stroke="#111" strokeWidth="1.600" /></svg>
              </PanelClose>
            </PanelTitle>
            <PanelBody>
              <Quotes>
                <colgroup><SymbolCol /><QuoteCol /><QuoteCol /></colgroup>
                <thead>
                  <tr><th scope="col">Symbol</th><th scope="col">Bid</th><th scope="col">Ask</th></tr>
                </thead>
                <tbody>
                  {quotes.map((q) => (
                    <QuoteRow key={q.name} $tone={q.tone} $selected={q.selected}>
                      <td><SymbolName><QuoteArrow up={q.up} />{q.name}</SymbolName></td>
                      <td>{q.bid}</td>
                      <td>{q.ask}</td>
                    </QuoteRow>
                  ))}
                </tbody>
              </Quotes>
            </PanelBody>
            <SideTabs $height={22}>
              <SideTab $active>Symbols</SideTab>
              <SideTab>Tick Chart</SideTab>
              <TabRest />
            </SideTabs>
            <PanelBody $grow />
            <SideTabs $height={26}>
              <SideTab $active>Common</SideTab>
              <SideTab>Favorites</SideTab>
              <TabRest />
            </SideTabs>
          </Side>
          <Chart />
          <Callout>
            <CalloutClip><OrdersTable big /></CalloutClip>
          </Callout>
          <Pointer width="41" height="85" aria-hidden="true">
            <path d="M0 0H41L3 85L0 82Z" fill={orange} />
          </Pointer>
        </Workspace>

        <Terminal>
          <Highlight>
            <HighlightRing>
              <HighlightClip><OrdersTable /></HighlightClip>
            </HighlightRing>
          </Highlight>
          <TerminalFoot>
            <TerminalName>Terminal</TerminalName>
            <TabArea>
              <Tabs>
                {tabs.map((t) => (
                  <Tab key={t} $active={t === "Trade"}>
                    {t}
                    {t === "Mailbox" && <MailCount>7</MailCount>}
                  </Tab>
                ))}
                <TabLine />
              </Tabs>
            </TabArea>
          </TerminalFoot>
        </Terminal>

        <StatusBar>
          <StatusCell>For Help, press F1</StatusCell>
          {statusWidths.map((w, i) => (
            <StatusCell key={i} $w={w}>{i === 0 ? "Default" : ""}</StatusCell>
          ))}
          <StatusCell $w={155}>
            <svg width="25" height="14" aria-hidden="true">
              {Array.from({ length: 9 }, (_, i) => (
                <g key={i}>
                  <rect x={i * 3} y="0" width="2" height={11 - i} fill="#4a6b1c" />
                  <rect x={i * 3} y={11 - i} width="2" height={3 + i} fill="#163a66" />
                </g>
              ))}
            </svg>
            2018/3 kb
            <ResizeGrip>
              <svg width="16" height="16"><path d="M2 16L16 2M7 16L16 7M12 16L16 12" stroke="#8a8a8a" strokeWidth="1.500" /></svg>
            </ResizeGrip>
          </StatusCell>
        </StatusBar>
      </Frame>
    </>
  );
}
